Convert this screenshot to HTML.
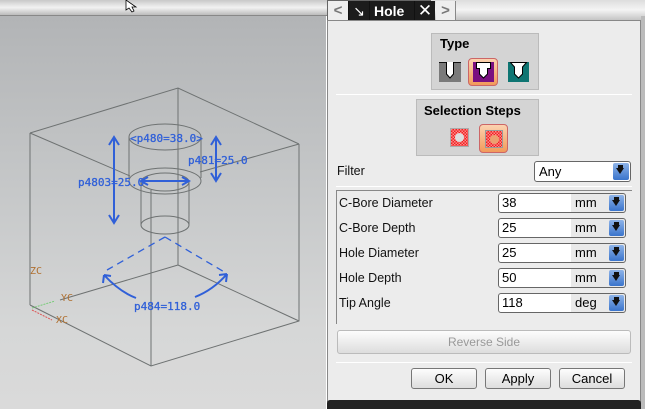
<!DOCTYPE html>
<html><head><style>
*{margin:0;padding:0;box-sizing:border-box}
body{width:645px;height:409px;overflow:hidden;position:relative;font-family:"Liberation Sans","DejaVu Sans",sans-serif;background:#ccc}
.abs{position:absolute}
.vp{left:0;top:16px;width:326px;height:393px;background:linear-gradient(#b2b4b6,#c6c8c9 45%,#d6d7d7 80%,#dadada)}
.topbar{left:0;top:0;width:645px;height:16px;background:linear-gradient(#c8c8c8,#f2f2f2 50%,#bbb);border-bottom:1px solid #888}
.panel{left:327px;top:20px;width:314px;height:382px;background:#ececec;border:1px solid #888}
.lbl{font-size:12.5px;color:#111}
.inp{height:20px;width:128px;border:1px solid #666;border-radius:3px;background:linear-gradient(90deg,#fff 0,#fff 57%,#e9e9e9 57%);font-size:13px;padding-left:3px;line-height:18px}
.unit{position:absolute;left:76px;top:0;font-size:13px}
.arr{position:absolute;right:1px;top:1px;width:15px;height:16px;background:linear-gradient(#8fb4e8,#3a74cc);border-radius:2px}
.arr:after{content:"";position:absolute;left:3px;top:5px;border-left:4.5px solid transparent;border-right:4.5px solid transparent;border-top:6px solid #111}
.arr:before{content:"";position:absolute;left:5px;top:2px;width:5px;height:4px;background:#111}
.btn{height:21px;border:1px solid #777;border-radius:3px;background:linear-gradient(#fdfdfd,#ddd);font-size:13px;text-align:center;line-height:19px}
.pin{position:absolute;left:0;top:0}
</style></head><body>
<div class="abs topbar"></div>
<div class="abs vp"></div>
<div class="abs" style="left:326px;top:16px;width:2px;height:393px;background:#fff"></div>
<svg class="abs" style="left:0;top:0" width="326" height="409">
<g stroke="#6e7272" stroke-width="1" fill="none">
<path d="M30 133 L178 88 L299 144 M30 133 L130 176 M299 144 L200 172 M178 88 L178 265 M30 133 L30 305 M30 305 L151 366 L299 321 L299 144 M151 190 L151 366 M178 265 L299 321 M178 265 L60 300"/>
<ellipse cx="165" cy="137" rx="36" ry="13"/>
<path d="M129 137 L129 178 M201 137 L201 178"/>
<ellipse cx="165" cy="181" rx="36" ry="13"/>
<ellipse cx="165" cy="182" rx="24" ry="9"/>
<path d="M141 182 L141 225 M189 182 L189 225"/>
<ellipse cx="165" cy="225" rx="24" ry="9"/>
</g>
<g stroke="#3060d8" stroke-width="2" fill="none">
<path d="M114 138 L114 222 M109 145 L114 137 L119 145 M109 215 L114 223 L119 215"/>
<path d="M216 138 L216 180 M211 145 L216 137 L221 145 M211 173 L216 181 L221 173"/>
<path d="M142 181 L188 181 M148 177 L141 181 L148 185 M182 177 L189 181 L182 185"/>
<path d="M104 275 Q120 292 136 298 M104 275 L103 283 M104 275 L111 276"/>
<path d="M195 297 Q213 290 227 274 M227 274 L219 275 M227 274 L226 282"/>
<path d="M165 237 L107 270 M165 237 L226 273" stroke-width="1.3" stroke-dasharray="7 5"/>
</g>
<g font-family="DejaVu Sans Mono,monospace" font-size="11" fill="#3060d8" stroke="#3060d8" stroke-width=".3">
<text x="130" y="142">&lt;p480=38.0&gt;</text>
<text x="188" y="164">p481=25.0</text>
<text x="78" y="186">p4803=25.0</text>
<text x="134" y="310">p484=118.0</text>
</g>
<g font-family="DejaVu Sans Mono,monospace" font-size="10" fill="#b07030">
<text x="30" y="274">ZC</text><text x="61" y="301">YC</text><text x="56" y="323">XC</text>
</g>
<path d="M32 308 L55 301" stroke="#7c7" stroke-dasharray="2 1"/>
<path d="M32 310 L52 320" stroke="#d55" stroke-dasharray="2 1"/>
<path d="M126 0 L126 10 L129 8 L132 12 L134 11 L132 7 L136 7 Z" fill="#fff" stroke="#000" stroke-width=".8"/>
</svg>
<!-- tabs -->
<div class="abs" style="left:327px;top:0;width:318px;height:22px;background:linear-gradient(#ddd,#f4f4f4 45%,#bbb);"></div>
<div class="abs" style="left:327px;top:0;width:104px;height:22px;background:#111;border:1px solid #666"></div>
<div class="abs" style="left:328px;top:1px;width:20px;height:20px;background:#eee;color:#777;font-size:15px;text-align:center;line-height:20px;font-weight:bold">&lt;</div>
<div class="abs" style="left:349px;top:1px;width:20px;height:20px;background:#1c1c1c;color:#fff;font-size:14px;text-align:center;line-height:20px">&#x2198;</div>
<div class="abs" style="left:370px;top:1px;width:44px;height:20px;background:#1c1c1c;color:#fff;font-size:14px;font-weight:bold;line-height:20px;padding-left:4px">Hole</div>
<div class="abs" style="left:415px;top:1px;width:20px;height:20px;background:#1c1c1c;color:#fff;font-size:17px;font-weight:bold;text-align:center;line-height:20px">✕</div>
<div class="abs" style="left:436px;top:1px;width:20px;height:20px;background:#eee;color:#777;font-size:15px;text-align:center;line-height:20px;font-weight:bold;border-right:1px solid #888">&gt;</div>
<div class="abs panel"></div>
<!-- Type -->
<div class="abs" style="left:431px;top:33px;width:108px;height:57px;background:#d4d4d4;border:1px solid #bbb"></div>
<div class="abs" style="left:440px;top:36px;font-size:13px;font-weight:bold">Type</div>
<svg class="abs" style="left:439px;top:62px" width="22" height="20"><rect width="22" height="20" fill="#7a7a7a"/><path d="M0 .5H22" stroke="#111"/><path d="M7.5 0V12L11 16L14.5 12V0" fill="#fff" stroke="#000"/></svg>
<div class="abs" style="left:468px;top:58px;width:30px;height:28px;border-radius:4px;background:linear-gradient(#fbd2b0,#f29a5a);border:1px solid #c66"></div>
<svg class="abs" style="left:473px;top:62px" width="21" height="20"><rect width="21" height="20" fill="#7a1080"/><path d="M3.5 .5H17.5V6.5H14.5V12L10.5 16L6.5 12V6.5H3.5Z" fill="#fff" stroke="#000"/></svg>
<svg class="abs" style="left:508px;top:62px" width="21" height="20"><rect width="21" height="20" fill="#0e7572"/><path d="M2.5 .5H18.5L14.5 5V12L10.5 16L6.5 12V5Z" fill="#fff" stroke="#000"/></svg>
<div class="abs" style="left:336px;top:94px;width:296px;height:1px;background:#bbb;border-bottom:1px solid #fff"></div>
<!-- Selection Steps -->
<div class="abs" style="left:416px;top:99px;width:123px;height:57px;background:#d4d4d4;border:1px solid #bbb"></div>
<div class="abs" style="left:424px;top:103px;font-size:13px;font-weight:bold">Selection Steps</div>
<div class="abs" style="left:450px;top:128px;width:19px;height:19px;background:repeating-conic-gradient(#e22 0 25%,#f88 0 50%) 0 0/3px 3px;border:1px solid #aaa"><div style="position:absolute;left:4px;top:4px;width:9px;height:9px;border-radius:50%;background:#ddd"></div></div>
<div class="abs" style="left:479px;top:124px;width:29px;height:29px;border-radius:4px;background:linear-gradient(#fbd2b0,#f29a5a);border:1px solid #c66"><div style="position:absolute;left:5px;top:5px;width:18px;height:18px;background:repeating-conic-gradient(#e22 0 25%,#f88 0 50%) 0 0/3px 3px;border:1px solid #999"><div style="position:absolute;left:4px;top:4px;width:9px;height:9px;border-radius:50%;background:#eca070"></div></div></div>
<!-- Filter -->
<div class="abs lbl" style="left:337px;top:164px">Filter</div>
<div class="abs" style="left:534px;top:161px;width:97px;height:21px;border:1px solid #666;border-radius:3px;background:#fff;font-size:13px;padding-left:4px;line-height:19px">Any<div class="arr" style="width:16px;height:17px"></div></div>
<div class="abs" style="left:336px;top:186px;width:296px;height:1px;background:#bbb;border-bottom:1px solid #fff"></div>
<!-- group -->
<div class="abs" style="left:336px;top:190px;width:296px;height:134px;border-left:1px solid #888;border-top:1px solid #888"></div>
<div class="abs lbl" style="left:339px;top:196px">C-Bore Diameter</div>
<div class="abs lbl" style="left:339px;top:221px">C-Bore Depth</div>
<div class="abs lbl" style="left:339px;top:246px">Hole Diameter</div>
<div class="abs lbl" style="left:339px;top:271px">Hole Depth</div>
<div class="abs lbl" style="left:339px;top:296px">Tip Angle</div>
<div class="abs inp" style="left:498px;top:193px">38<span class="unit">mm</span><div class="arr"></div></div>
<div class="abs inp" style="left:498px;top:218px">25<span class="unit">mm</span><div class="arr"></div></div>
<div class="abs inp" style="left:498px;top:243px">25<span class="unit">mm</span><div class="arr"></div></div>
<div class="abs inp" style="left:498px;top:268px">50<span class="unit">mm</span><div class="arr"></div></div>
<div class="abs inp" style="left:498px;top:293px">118<span class="unit">deg</span><div class="arr"></div></div>
<div class="abs btn" style="left:337px;top:330px;width:294px;height:24px;color:#999;border-color:#bbb;line-height:22px;font-size:12px">Reverse Side</div>
<div class="abs" style="left:336px;top:362px;width:296px;height:1px;background:#bbb;border-bottom:1px solid #fff"></div>
<div class="abs btn" style="left:411px;top:368px;width:66px">OK</div>
<div class="abs btn" style="left:485px;top:368px;width:66px">Apply</div>
<div class="abs btn" style="left:559px;top:368px;width:66px">Cancel</div>
<div class="abs" style="left:327px;top:400px;width:314px;height:9px;background:#222;border-radius:3px 3px 0 0"></div>
<div class="abs" style="left:641px;top:16px;width:4px;height:393px;background:#bbb"></div>
</body></html>
